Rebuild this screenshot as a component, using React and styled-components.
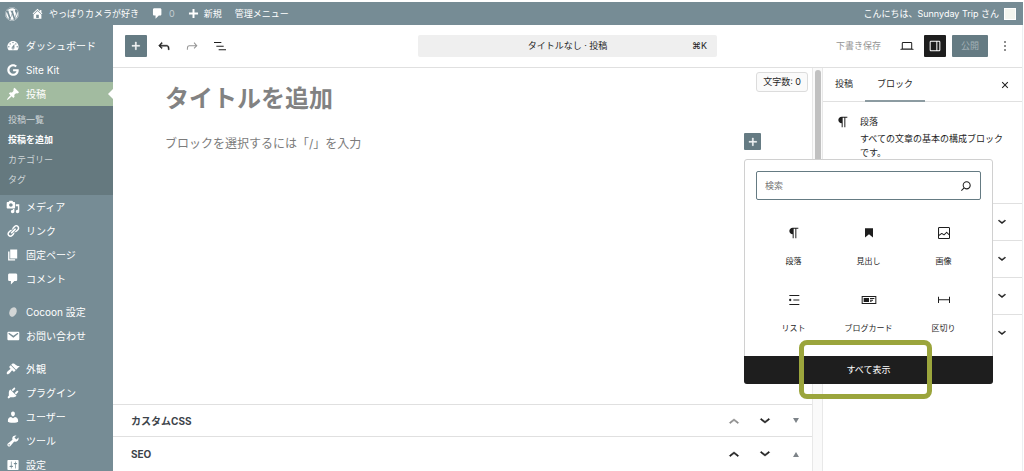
import React from "react";
import styled, { createGlobalStyle, css } from "styled-components";
import { FaWordpress, FaGoogle } from "react-icons/fa";

const color = {
  base: "#768c95",
  submenu: "#65797f",
  current: "#a2bba0",
  accent: "#657b83",
  ink: "#1e1e1e",
  line: "#e0e0e0",
  muted: "#949494",
  callout: "#9ba53c",
};

const GlobalStyle = createGlobalStyle`
  *, *::before, *::after { box-sizing: border-box; }
  body {
    margin: 0;
    background: #fff;
    color: ${color.ink};
    font-family: Inter, "Noto Sans CJK JP", sans-serif;
    font-size: 9px;
    line-height: 14px;
  }
  a { color: inherit; text-decoration: none; }
  h1, h2, p, ul { margin: 0; padding: 0; }
  ul { list-style: none; }
  button, input { font: inherit; color: inherit; }
  button { border: 0; padding: 0; background: none; cursor: pointer; }
  svg { display: block; flex: none; fill: currentColor; }
`;

/* 24-unit editor icons */
const editorPaths = {
  plus: "M11 12.5V17.5H12.5V12.5H17.5V11H12.5V6H11V11H6V12.5H11Z",
  undo: "M18.3 11.7c-.6-.6-1.4-.9-2.3-.9H6.7l2.9-3.3-1.1-1-4.5 5L8.5 16l1-1-2.7-2.7H16c.5 0 .9.2 1.3.5 1 1 1 3.4 1 4.5v.3h1.5v-.2c0-1.5 0-4.3-1.5-5.7z",
  redo: "M15.6 6.5l-1.1 1 2.9 3.3H8c-.9 0-1.7.3-2.3.9-1.4 1.5-1.4 4.2-1.4 5.6v.2h1.5v-.3c0-1.1 0-3.5 1-4.5.3-.3.7-.5 1.3-.5h9.2L14.5 15l1.1 1.1 4.6-4.6-4.6-5z",
  outline: "M3 6h11v1.5H3V6Zm3.5 5.5h11V13h-11v-1.5ZM21 17H10v1.5h11V17Z",
  desktop: "M20.5 16h-.7V8c0-1.1-.9-2-2-2H6.2c-1.1 0-2 .9-2 2v8h-.7c-.8 0-1.5.7-1.5 1.5h20c0-.8-.7-1.5-1.5-1.5zM5.7 8c0-.3.2-.5.5-.5h11.6c.3 0 .5.2.5.5v7.6H5.7V8z",
  drawer: "M18 4H6c-1.1 0-2 .9-2 2v12c0 1.1.9 2 2 2h12c1.1 0 2-.9 2-2V6c0-1.1-.9-2-2-2zm-4 14.5H6c-.3 0-.5-.2-.5-.5V6c0-.3.2-.5.5-.5h8v13zm4.5-.5c0 .3-.2.5-.5.5h-2.5v-13H18c.3 0 .5.2.5.5v12z",
  more: "M13 19h-2v-2h2v2zm0-6h-2v-2h2v2zm0-6h-2V5h2v2z",
  close: "M12 13.06l3.712 3.713 1.061-1.06L13.061 12l3.712-3.712-1.06-1.06L12 10.938 8.288 7.227l-1.061 1.06L10.939 12l-3.712 3.712 1.06 1.061L12 13.061z",
  paragraph: "m9.99609 14v-.2251l.00391.0001v6.225h1.5v-14.5h2.5v14.5h1.5v-14.5h3v-1.5h-8.50391c-2.76142 0-5 2.23858-5 5 0 2.7614 2.23858 5 5 5z",
  heading: "M6 5V18.5911L12 13.8473L18 18.5911V5H6Z",
  image: "M19 3H5c-1.1 0-2 .9-2 2v14c0 1.1.9 2 2 2h14c1.1 0 2-.9 2-2V5c0-1.1-.9-2-2-2zM5 4.5h14c.3 0 .5.2.5.5v8.4l-3-2.9c-.3-.3-.8-.3-1 0L11.9 14 9 12c-.3-.2-.6-.2-.8 0l-3.6 2.6V5c-.1-.3.1-.5.4-.5zm14 15H5c-.3 0-.5-.2-.5-.5v-2.4l4.1-3 3 1.9c.3.2.7.2.9-.1L16 12l3.5 3.4V19c0 .3-.2.5-.5.5z",
  list: "M5 4.500v1.500h15V4.500H5zm6 8.250h9v-1.500h-9v1.500zM5 19.500h15V18H5v1.500zM8 12c0-1-.8-1.700-1.700-1.700s-1.700.8-1.700 1.700.8 1.700 1.700 1.700 1.700-.8 1.700-1.700z",
  blogcard: "M1 6h22v12H1V6zm1.500 1.500v9h19v-9h-19zM4 9h8v6H4V9zm9.500 0H20v1.500h-6.500V9zm0 2.500H18V13h-4.500v-1.500zm0 2.500H16v1h-2.500v-1z",
  separator: "M4.500 12.500v4H3V7h1.500v3.987h15V7H21v9.500h-1.500v-4h-15Z",
  search: "M13 5c-3.300 0-6 2.700-6 6 0 1.400.5 2.700 1.300 3.700l-3.800 3.800 1.100 1.100 3.800-3.800c1 .8 2.300 1.300 3.700 1.300 3.300 0 6-2.700 6-6S16.300 5 13 5zm0 10.500c-2.500 0-4.500-2-4.500-4.500s2-4.500 4.500-4.500 4.500 2 4.500 4.500-2 4.500-4.500 4.500z",
  down: "M17.500 10.100L12 14.500l-5.500-4.400.9-1.200L12 12.500l4.500-3.600 1 1.200z",
  up: "M6.500 13.900L12 9.500l5.500 4.400-.9 1.200L12 11.500l-4.500 3.600-1-1.200z",
};

/* 20-unit admin menu icons */
const adminPaths = {
  home: "M16 8.500l1.530 1.530-1.060 1.060L10 4.600l-6.470 6.490-1.060-1.060L10 2.500l4 4v-2h2v4zm-6-2.460l6 5.990V18H4v-5.970zM12 17v-5H8v5h4z",
  comment: "M5 2h9c1.100 0 2 .9 2 2v7c0 1.100-.9 2-2 2h-2l-5 5v-5H5c-1.100 0-2-.9-2-2V4c0-1.100.9-2 2-2z",
  add: "M17 8.500v3h-5.500v5.500h-3v-5.500H3v-3h5.500V3h3v5.500z",
  dashboard: "M3.760 16h12.480c1.100-1.370 1.760-3.110 1.760-5 0-4.420-3.580-8-8-8s-8 3.580-8 8c0 1.890.66 3.630 1.760 5zM10 4c.55 0 1 .45 1 1s-.45 1-1 1-1-.45-1-1 .45-1 1-1zM6 6c.55 0 1 .45 1 1s-.45 1-1 1-1-.45-1-1 .45-1 1-1zm8 0c.55 0 1 .45 1 1s-.45 1-1 1-1-.45-1-1 .45-1 1-1zm-5.370 5.550L12 7v6c0 1.100-.9 2-2 2s-2-.9-2-2c0-.57.24-1.080.63-1.450zM4 10c.55 0 1 .45 1 1s-.45 1-1 1-1-.45-1-1 .45-1 1-1zm12 0c.55 0 1 .45 1 1s-.45 1-1 1-1-.45-1-1 .45-1 1-1zm-5 3c0-.55-.45-1-1-1s-1 .45-1 1 .45 1 1 1 1-.45 1-1z",
  post: "M10.440 3.020l1.820-1.820 6.360 6.350-1.830 1.820c-1.050-.68-2.480-.57-3.410.36l-.75.75c-.92.93-1.040 2.350-.35 3.410l-1.830 1.820-2.410-2.410-2.800 2.790c-.42.42-3.380 2.710-3.800 2.290s1.860-3.390 2.280-3.810l2.790-2.790L4.100 9.360l1.830-1.820c1.050.69 2.480.57 3.400-.36l.75-.75c.93-.92 1.050-2.350.36-3.410z",
  media: "M13 11V4c0-.55-.45-1-1-1h-1.670L9 1H5L3.670 3H2c-.55 0-1 .45-1 1v7c0 .55.45 1 1 1h10c.55 0 1-.45 1-1zM7 4.500c1.380 0 2.500 1.120 2.500 2.500S8.380 9.500 7 9.500 4.500 8.380 4.500 7 5.620 4.500 7 4.500zM14 6h5v10.500c0 1.380-1.120 2.500-2.500 2.500S14 17.880 14 16.500s1.120-2.500 2.500-2.500c.17 0 .34.02.5.05V9h-3V6zm-4 8.050V13h2v3.500c0 1.380-1.120 2.500-2.500 2.500S7 17.880 7 16.500 8.120 14 9.500 14c.17 0 .34.02.5.05z",
  link: "M17.740 2.760c1.680 1.690 1.680 4.410 0 6.100l-1.530 1.520c-1.120 1.120-2.700 1.470-4.140 1.090l2.620-2.610.76-.77.76-.76c.84-.84.84-2.200 0-3.040-.84-.85-2.200-.85-3.040 0l-.77.76-3.380 3.380c-.37-1.440-.02-3.020 1.100-4.140l1.520-1.530c1.690-1.680 4.420-1.680 6.100 0zM8.590 13.430l5.340-5.340c.42-.42.42-1.100 0-1.520-.44-.43-1.130-.39-1.530 0l-5.330 5.340c-.42.42-.42 1.100 0 1.520.44.43 1.130.39 1.520 0zm-.76 2.290l4.140-4.150c.38 1.440.03 3.020-1.090 4.140l-1.520 1.530c-1.690 1.680-4.410 1.680-6.100 0-1.680-1.680-1.680-4.420 0-6.100l1.530-1.520c1.120-1.120 2.700-1.470 4.140-1.100l-4.140 4.150c-.85.84-.85 2.200 0 3.050.84.84 2.200.84 3.040 0z",
  page: "M6 15V2h10v13H6zm-1 1h8v2H3V5h2v11z",
  mail: "M3.870 4h13.250C18.370 4 19 4.590 19 5.790v8.420c0 1.190-.63 1.790-1.880 1.790H3.870c-1.250 0-1.880-.6-1.880-1.790V5.790c0-1.200.63-1.790 1.880-1.790zm6.620 8.600l6.740-5.530c.24-.2.43-.66.13-1.070-.29-.41-.82-.42-1.170-.17l-5.700 3.860L4.800 5.830c-.35-.25-.88-.24-1.170.17-.3.41-.11.87.13 1.070z",
  brush: "M14.480 11.060L7.410 3.990l1.500-1.500c.5-.56 2.300-.47 3.510.32 1.210.8 1.430 1.280 2.910 2.100 1.180.64 2.450 1.260 4.450.85zm-.71.71L6.700 4.700 4.930 6.470c-.39.39-.39 1.020 0 1.410l1.060 1.060c.39.39.39 1.030 0 1.420-.6.6-1.430 1.110-2.210 1.690-.35.26-.7.53-1.010.84C1.430 14.230.4 16.080 1.400 17.070c.99 1 2.840-.03 4.180-1.360.31-.31.58-.66.85-1.020.57-.78 1.080-1.610 1.690-2.210.39-.39 1.020-.39 1.410 0l1.060 1.060c.39.39 1.020.39 1.410 0z",
  plug: "M13.110 4.360L9.870 7.600 8 5.730l3.240-3.240c.35-.34 1.050-.2 1.560.32.52.51.66 1.210.31 1.550zm-8 1.770l.91-1.120 9.010 9.010-1.190.84c-.71.71-2.630 1.160-3.820 1.160H6.140L4.900 17.260c-.59.59-1.540.59-2.120 0-.59-.58-.59-1.530 0-2.120l1.240-1.240v-3.880c0-1.130.4-3.190 1.090-3.890zm7.260 3.970l3.240-3.240c.34-.35 1.040-.21 1.550.31.52.51.66 1.210.31 1.550l-3.240 3.250z",
  user: "M10 9.250c-2.270 0-2.730-3.440-2.730-3.440C7 4.020 7.820 2 9.970 2c2.160 0 2.980 2.020 2.710 3.810 0 0-.41 3.440-2.680 3.440zm0 2.570L12.720 10c2.390 0 4.520 2.330 4.520 4.530v2.490s-3.650 1.130-7.240 1.130c-3.650 0-7.240-1.130-7.240-1.130v-2.490c0-2.250 1.940-4.480 4.470-4.480z",
  wrench: "M16.680 9.770c-1.340 1.340-3.300 1.670-4.950.99l-5.410 6.520c-.99.99-2.590.99-3.580 0s-.99-2.590 0-3.570l6.520-5.420c-.68-1.650-.35-3.610.99-4.950 1.280-1.280 3.120-1.620 4.720-1.060l-2.890 2.890 2.820 2.820 2.860-2.870c.53 1.580.18 3.390-1.080 4.650zM3.810 16.210c.4.39 1.040.39 1.430 0 .4-.4.4-1.040 0-1.430-.39-.4-1.030-.4-1.430 0-.39.39-.39 1.030 0 1.430z",
  settings: "M18 16V4c0-.55-.45-1-1-1H3c-.55 0-1 .45-1 1v12c0 .55.45 1 1 1h14c.55 0 1-.45 1-1zM8 11h1c.55 0 1 .45 1 1s-.45 1-1 1H8v1.500c0 .28-.22.5-.5.5s-.5-.22-.5-.5V13H6c-.55 0-1-.45-1-1s.45-1 1-1h1V5.500c0-.28.22-.5.5-.5s.5.22.5.5V11zm5-2h-1c-.55 0-1-.45-1-1s.45-1 1-1h1V5.500c0-.28.22-.5.5-.5s.5.22.5.5V7h1c.55 0 1 .45 1 1s-.45 1-1 1h-1v5.500c0 .28-.22.5-.5.5s-.5-.22-.5-.5V9z",
};

const Icon = ({ name, size = 16, bold = false }) => (
  <svg
    width={size}
    height={size}
    viewBox="0 0 24 24"
    fillRule="evenodd"
    stroke={bold ? "currentColor" : "none"}
    strokeWidth="0.7"
    aria-hidden="true"
  >
    <path d={editorPaths[name]} />
  </svg>
);

const AdminIcon = ({ name, size = 14 }) => {
  if (name === "google") return <FaGoogle size={12} />;
  return (
    <svg width={size} height={size} viewBox="0 0 20 20" aria-hidden="true">
      {name === "cocoon" ? (
        <ellipse cx="10" cy="10" rx="5" ry="7" transform="rotate(25 10 10)" fill="#d3d6d6" />
      ) : (
        <path d={adminPaths[name]} />
      )}
    </svg>
  );
};

const Shell = styled.div`
  display: flex;
  flex-direction: column;
  height: 100vh;
  overflow: hidden;
  padding: 2px 1px 0 0;
`;

const AdminBar = styled.header`
  display: flex;
  align-items: center;
  flex: none;
  height: 23px;
  padding: 0 7px 0 5px;
  background: ${color.base};
  color: #fff;
`;

const BarLink = styled.a`
  display: flex;
  align-items: center;
  gap: ${(p) => p.$gap || 4}px;
  margin-right: ${(p) => p.$after || 0}px;
  white-space: nowrap;
`;

const Count = styled.span`
  color: #c3ccd0;
`;

const Account = styled(BarLink)`
  margin-left: auto;
`;

const Avatar = styled.span`
  width: 12px;
  height: 12px;
  border: 1px solid #fff;
  background: #f3f5ef;
`;

const Body = styled.div`
  display: flex;
  flex: 1;
  min-height: 0;
`;

const AdminMenu = styled.nav`
  flex: none;
  width: 113px;
  padding-top: 9px;
  overflow: hidden;
  background: ${color.base};
  color: #fff;
  font-size: 10px;
`;

const MenuGroup = styled.ul`
  & + & {
    margin-top: 9px;
  }
`;

const MenuLink = styled.a`
  position: relative;
  display: flex;
  align-items: center;
  gap: 6px;
  height: 24px;
  padding-left: 5px;
  ${(p) =>
    p.$current &&
    css`
      background: ${color.current};
      &::after {
        content: "";
        position: absolute;
        right: 0;
        top: 7px;
        border: 5px solid transparent;
        border-left: 0;
        border-right-color: #fff;
      }
    `}
`;

const MenuIcon = styled.span`
  display: flex;
  justify-content: center;
  width: 15px;
`;

const Submenu = styled.ul`
  padding: 4px 0 5px 8px;
  background: ${color.submenu};
  color: #cfd6d8;
  font-size: 9px;
  line-height: 20px;
`;

const SubmenuLink = styled.a`
  display: block;
  color: ${(p) => (p.$current ? "#fff" : "inherit")};
  font-weight: ${(p) => (p.$current ? 700 : 400)};
`;

const Workspace = styled.div`
  display: flex;
  flex-direction: column;
  flex: 1;
  min-width: 0;
  border-right: 1px solid #eceff1;
`;

const Toolbar = styled.div`
  display: grid;
  grid-template-columns: 1fr minmax(120px, 299px) 1fr;
  align-items: center;
  flex: none;
  height: 43px;
  padding: 0 12px;
  border-bottom: 1px solid ${color.line};
`;

const ToolGroup = styled.div`
  display: flex;
  align-items: center;
  gap: 6px;
`;

const DocumentActions = styled(ToolGroup)`
  justify-content: flex-end;
  margin-right: -6px;
`;

const IconButton = styled.button`
  display: flex;
  align-items: center;
  justify-content: center;
  width: ${(p) => p.$w || 22}px;
  height: ${(p) => p.$w || 22}px;
  border-radius: 1px;
  background: ${(p) => p.$bg || "transparent"};
  color: ${(p) => (p.$bg ? "#fff" : p.$dim ? "#949494" : color.ink)};
`;

const CommandBar = styled.button`
  display: grid;
  grid-template-columns: 1fr auto 1fr;
  align-items: center;
  height: 22px;
  padding: 0 10px;
  border-radius: 2px;
  background: #efefef;
`;

const Shortcut = styled.span`
  grid-column: 3;
  justify-self: end;
`;

const CommandTitle = styled.span`
  grid-column: 2;
`;

const TextButton = styled.button`
  color: ${color.muted};
  margin-right: 9px;
`;

const PublishButton = styled.button`
  width: 36px;
  height: 22px;
  border-radius: 1px;
  background: ${color.accent};
  color: #a3b1b6;
`;

const Columns = styled.div`
  display: flex;
  flex: 1;
  min-height: 0;
`;

const Editor = styled.main`
  display: flex;
  flex-direction: column;
  flex: 1;
  min-width: 0;
`;

const Canvas = styled.section`
  position: relative;
  flex: 1;
  padding: 13px 51px 0 52px;
`;

const CharCount = styled.div`
  position: absolute;
  top: 4px;
  right: 4px;
  padding: 2px 6px;
  border: 1px solid #dcdcdc;
  border-radius: 3px;
  background: #fafafa;
`;

const PostTitle = styled.h1`
  color: #828282;
  font-size: 24px;
  line-height: 36px;
`;

const BlockRow = styled.div`
  display: flex;
  align-items: flex-start;
  justify-content: space-between;
  margin-top: 16px;
  color: #7c7c7c;
  font-size: 12px;
  line-height: 17px;
`;

const BlockPrompt = styled.p`
  padding-top: 2px;
`;

const InserterAnchor = styled.div`
  position: relative;
  width: 17px;
  z-index: 2;
`;

const Popover = styled.div`
  position: absolute;
  top: 26px;
  left: 0;
  width: 249px;
  border: 1px solid #d0d0d0;
  border-radius: 3px;
  background: #fff;
  color: ${color.ink};
  font-size: 8px;
  line-height: 12px;
`;

const SearchField = styled.label`
  display: flex;
  align-items: center;
  height: 29px;
  margin: 11px 11px 0;
  padding: 0 6px 0 8px;
  border: 1px solid ${color.accent};
  border-radius: 2px;
`;

const SearchInput = styled.input`
  flex: 1;
  min-width: 0;
  padding: 0;
  border: 0;
  outline: 0;
  background: none;
  font-size: 9px;
  &::placeholder {
    color: #757575;
    opacity: 1;
  }
`;

const BlockGrid = styled.div`
  display: grid;
  grid-template-columns: repeat(3, 1fr);
  grid-auto-rows: 67px;
  padding: 12px 11px 10px;
`;

const BlockButton = styled.button`
  display: flex;
  flex-direction: column;
  align-items: center;
  justify-content: center;
  gap: 14px;
`;

const ShowAllWrap = styled.div`
  position: relative;
  margin: 0 -1px -1px;
`;

const ShowAll = styled.button`
  display: block;
  width: 100%;
  height: 28px;
  border-radius: 0 0 3px 3px;
  background: ${color.ink};
  color: #fff;
  font-size: 9px;
`;

const Callout = styled.span`
  position: absolute;
  inset: -16px 61px -15px 55px;
  border: 5px solid ${color.callout};
  border-radius: 8px;
  pointer-events: none;
`;

const MetaBox = styled.section`
  display: flex;
  align-items: center;
  flex: none;
  height: ${(p) => (p.$last ? 35 : 32)}px;
  padding: 0 6px 0 18px;
  border-top: 1px solid ${color.line};
`;

const MetaTitle = styled.h2`
  flex: 1;
  color: #3c434a;
  font-size: 10px;
`;

const MetaActions = styled.div`
  display: flex;
  gap: 11px;
`;

const MetaButton = styled(IconButton)`
  width: 20px;
  color: ${(p) => (p.$dim ? "#8c8c8c" : color.ink)};
`;

const Triangle = styled.span`
  border: 3px solid transparent;
  ${(p) =>
    p.$up
      ? "border-bottom: 5px solid #7d8388; border-top: 0;"
      : "border-top: 5px solid #7d8388; border-bottom: 0;"}
`;

const ScrollTrack = styled.div`
  flex: none;
  width: 11px;
  padding: 2px 1px 0 2px;
  border: solid #e8e8e8;
  border-width: 0 1px;
  background: #fafafa;
`;

const ScrollThumb = styled.div`
  height: 45%;
  border-radius: 3px;
  background: #c1c1c1;
`;

const Inspector = styled.aside`
  flex: none;
  width: 199px;
`;

const Tabs = styled.div`
  display: flex;
  align-items: stretch;
  height: 34px;
  padding-right: 6px;
  border-bottom: 1px solid ${color.line};
`;

const Tab = styled.button`
  padding: 0 12px;
  margin-bottom: -1px;
  border-bottom: 2px solid ${(p) => (p.$active ? "#8c9ba1" : "transparent")};
`;

const CloseSlot = styled.div`
  display: flex;
  align-items: center;
  margin-left: auto;
`;

const BlockCard = styled.section`
  display: flex;
  gap: 9px;
  height: 101px;
  padding: 12px 12px 0;
`;

const CardText = styled.div`
  flex: 1;
  padding-top: 1px;
`;

const CardTitle = styled.h2`
  margin-bottom: 3px;
  font-size: 9px;
  font-weight: 400;
`;

const PanelToggle = styled.button`
  display: flex;
  align-items: center;
  justify-content: flex-end;
  width: 100%;
  height: 37px;
  padding-right: 12px;
  border-top: 1px solid ${color.line};
`;

const menuGroups = [
  [
    ["dashboard", "ダッシュボード"],
    ["google", "Site Kit"],
    ["post", "投稿", ["投稿一覧", "投稿を追加", "カテゴリー", "タグ"]],
    ["media", "メディア"],
    ["link", "リンク"],
    ["page", "固定ページ"],
    ["comment", "コメント"],
  ],
  [
    ["cocoon", "Cocoon 設定"],
    ["mail", "お問い合わせ"],
  ],
  [
    ["brush", "外観"],
    ["plug", "プラグイン"],
    ["user", "ユーザー"],
    ["wrench", "ツール"],
    ["settings", "設定"],
  ],
];

const blocks = [
  ["paragraph", "段落"],
  ["heading", "見出し"],
  ["image", "画像"],
  ["list", "リスト"],
  ["blogcard", "ブログカード"],
  ["separator", "区切り"],
];

const panels = ["色", "タイポグラフィ", "サイズ", "高度な設定"];

function SideMenu() {
  return (
    <AdminMenu>
      {menuGroups.map((group, i) => (
        <MenuGroup key={i}>
          {group.map(([icon, label, children]) => (
            <li key={label}>
              <MenuLink href="#" $current={!!children}>
                <MenuIcon>
                  <AdminIcon name={icon} />
                </MenuIcon>
                {label}
              </MenuLink>
              {children && (
                <Submenu>
                  {children.map((child) => (
                    <li key={child}>
                      <SubmenuLink href="#" $current={child === "投稿を追加"}>
                        {child}
                      </SubmenuLink>
                    </li>
                  ))}
                </Submenu>
              )}
            </li>
          ))}
        </MenuGroup>
      ))}
    </AdminMenu>
  );
}

function Inserter() {
  return (
    <InserterAnchor>
      <IconButton $w={17} $bg={color.accent} aria-label="ブロックを追加">
        <Icon name="plus" bold />
      </IconButton>
      <Popover>
        <SearchField>
          <SearchInput type="text" placeholder="検索" aria-label="検索" />
          <Icon name="search" />
        </SearchField>
        <BlockGrid>
          {blocks.map(([icon, label]) => (
            <BlockButton key={label}>
              <Icon name={icon} />
              {label}
            </BlockButton>
          ))}
        </BlockGrid>
        <ShowAllWrap>
          <ShowAll>すべて表示</ShowAll>
          <Callout />
        </ShowAllWrap>
      </Popover>
    </InserterAnchor>
  );
}

function MetaPanel({ title, first }) {
  return (
    <MetaBox $last={!first}>
      <MetaTitle>{title}</MetaTitle>
      <MetaActions>
        <MetaButton $dim={first} aria-label="上に移動">
          <Icon name="up" size={20} bold />
        </MetaButton>
        <MetaButton aria-label="下に移動">
          <Icon name="down" size={20} bold />
        </MetaButton>
        <MetaButton aria-label="パネルを切り替え">
          <Triangle $up={!first} />
        </MetaButton>
      </MetaActions>
    </MetaBox>
  );
}

export default function App() {
  return (
    <Shell>
      <GlobalStyle />
      <AdminBar>
        <BarLink href="#" $after={12} aria-label="WordPress">
          <FaWordpress size={14} />
        </BarLink>
        <BarLink href="#" $gap={5} $after={12}>
          <AdminIcon name="home" size={13} />
          やっぱりカメラが好き
        </BarLink>
        <BarLink href="#" $gap={5} $after={12}>
          <AdminIcon name="comment" size={13} />
          <Count>0</Count>
        </BarLink>
        <BarLink href="#" $after={13}>
          <AdminIcon name="add" size={13} />
          新規
        </BarLink>
        <BarLink href="#">管理メニュー</BarLink>
        <Account href="#" $gap={5}>
          こんにちは、Sunnyday Trip さん
          <Avatar />
        </Account>
      </AdminBar>
      <Body>
        <SideMenu />
        <Workspace>
          <Toolbar>
            <ToolGroup>
              <IconButton $bg={color.accent} aria-label="ブロック挿入ツール">
                <Icon name="plus" bold />
              </IconButton>
              <IconButton aria-label="元に戻す">
                <Icon name="undo" bold />
              </IconButton>
              <IconButton $dim aria-label="やり直す">
                <Icon name="redo" />
              </IconButton>
              <IconButton aria-label="ドキュメント概観">
                <Icon name="outline" />
              </IconButton>
            </ToolGroup>
            <CommandBar>
              <CommandTitle>タイトルなし · 投稿</CommandTitle>
              <Shortcut>⌘K</Shortcut>
            </CommandBar>
            <DocumentActions>
              <TextButton>下書き保存</TextButton>
              <IconButton aria-label="表示">
                <Icon name="desktop" />
              </IconButton>
              <IconButton $bg={color.ink} aria-label="設定">
                <Icon name="drawer" />
              </IconButton>
              <PublishButton>公開</PublishButton>
              <IconButton aria-label="オプション">
                <Icon name="more" />
              </IconButton>
            </DocumentActions>
          </Toolbar>
          <Columns>
            <Editor>
              <Canvas>
                <CharCount>文字数: 0</CharCount>
                <PostTitle>タイトルを追加</PostTitle>
                <BlockRow>
                  <BlockPrompt>ブロックを選択するには「/」を入力</BlockPrompt>
                  <Inserter />
                </BlockRow>
              </Canvas>
              <MetaPanel title="カスタムCSS" first />
              <MetaPanel title="SEO" />
            </Editor>
            <ScrollTrack>
              <ScrollThumb />
            </ScrollTrack>
            <Inspector>
              <Tabs>
                <Tab>投稿</Tab>
                <Tab $active>ブロック</Tab>
                <CloseSlot>
                  <IconButton aria-label="閉じる">
                    <Icon name="close" />
                  </IconButton>
                </CloseSlot>
              </Tabs>
              <BlockCard>
                <Icon name="paragraph" />
                <CardText>
                  <CardTitle>段落</CardTitle>
                  <p>すべての文章の基本の構成ブロックです。</p>
                </CardText>
              </BlockCard>
              {panels.map((panel) => (
                <PanelToggle key={panel} aria-label={panel}>
                  <Icon name="down" bold />
                </PanelToggle>
              ))}
            </Inspector>
          </Columns>
        </Workspace>
      </Body>
    </Shell>
  );
}
